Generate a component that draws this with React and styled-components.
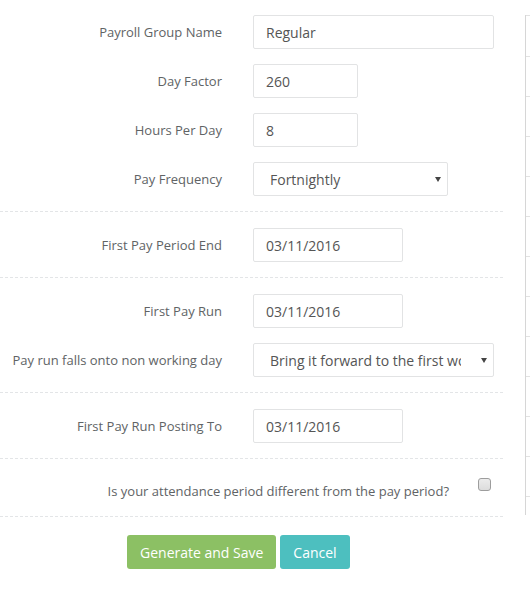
import styled, { createGlobalStyle } from 'styled-components';

const GlobalStyle = createGlobalStyle`
  body {
    margin: 0;
    background: #fff;
    font-family: 'Open Sans', 'DejaVu Sans', sans-serif;
  }
  * {
    box-sizing: border-box;
  }
`;

const Page = styled.div`
  display: flex;
  width: 530px;
`;

const Form = styled.form`
  width: 503px;
  flex: none;
  padding-top: 15px;
`;

const Row = styled.div`
  display: flex;
  align-items: center;
  gap: 31px;
  margin-bottom: 15px;
`;

const Label = styled.label`
  width: 222px;
  flex: none;
  text-align: right;
  font-size: 13px;
  line-height: 18px;
  padding-bottom: 1px;
  color: #606365;
`;

const TextInput = styled.input`
  width: ${(p) => p.$width}px;
  height: 34px;
  padding: 6px 12px;
  border: 1px solid #e2e3e4;
  border-radius: 2px;
  font-family: inherit;
  font-size: 14px;
  color: #555;
  background: #fff;
  outline: none;
`;

const SelectBox = styled.div`
  position: relative;
  width: ${(p) => p.$width}px;

  &::after {
    content: '';
    position: absolute;
    right: 7px;
    top: 15px;
    border-left: 3px solid transparent;
    border-right: 3px solid transparent;
    border-top: 5px solid #444;
    pointer-events: none;
  }
`;

const Select = styled.select`
  appearance: none;
  width: 100%;
  height: 34px;
  padding: 0 32px 0 16px;
  border: 1px solid #e2e3e4;
  border-radius: 2px;
  font-family: inherit;
  font-size: 14px;
  color: #555;
  background: #fff;
  outline: none;
`;

const Divider = styled.div`
  border-top: 1px dashed #e3e5e7;
  margin-bottom: 16px;
`;

const CheckRow = styled.div`
  display: flex;
  align-items: flex-start;
  gap: 29px;
  margin-bottom: 15px;
`;

const CheckLabel = styled.label`
  width: 449px;
  flex: none;
  text-align: right;
  padding-top: 6px;
  font-size: 13px;
  line-height: 20px;
  color: #606365;
`;

const Checkbox = styled.input`
  appearance: none;
  width: 13px;
  height: 13px;
  margin: 3px 0 0;
  border: 1px solid #9d9d9d;
  border-radius: 3px;
  background: linear-gradient(#ececec, #dcdcdc);
`;

const Actions = styled.div`
  display: flex;
  gap: 4px;
  padding-left: 127px;
  margin-top: 18px;
`;

const Button = styled.button`
  height: 34px;
  padding: 0 13px;
  border: none;
  border-radius: 3px;
  font-family: inherit;
  font-size: 14px;
  color: #fff;
  background: ${(p) => (p.$variant === 'cancel' ? '#4dbfbf' : '#8cc064')};
  cursor: pointer;
`;

const Side = styled.div`
  margin: 15px 0 0 22px;
  flex: 1;
  height: 500px;
  border-left: 1px solid #d6d6d6;
`;

const SideRow = styled.div`
  height: ${(p) => (p.$first ? 41 : 40)}px;
  border-top: 1px solid #e2e2e2;
`;

const Field = ({ label, children }) => (
  <Row>
    <Label>{label}</Label>
    {children}
  </Row>
);

const DropDown = ({ width, value }) => (
  <SelectBox $width={width}>
    <Select defaultValue={value}>
      <option>{value}</option>
    </Select>
  </SelectBox>
);

const App = () => {
  const sideRows = Array.from({ length: 13 });
  return (
    <Page>
      <GlobalStyle />
      <Form onSubmit={(e) => e.preventDefault()}>
        <Field label="Payroll Group Name">
          <TextInput $width={241} defaultValue="Regular" />
        </Field>
        <Field label="Day Factor">
          <TextInput $width={105} defaultValue="260" />
        </Field>
        <Field label="Hours Per Day">
          <TextInput $width={105} defaultValue="8" />
        </Field>
        <Field label="Pay Frequency">
          <DropDown width={195} value="Fortnightly" />
        </Field>
        <Divider />
        <Field label="First Pay Period End">
          <TextInput $width={150} defaultValue="03/11/2016" />
        </Field>
        <Divider />
        <Field label="First Pay Run">
          <TextInput $width={150} defaultValue="03/11/2016" />
        </Field>
        <Field label="Pay run falls onto non working day">
          <DropDown width={241} value="Bring it forward to the first working day" />
        </Field>
        <Divider />
        <Field label="First Pay Run Posting To">
          <TextInput $width={150} defaultValue="03/11/2016" />
        </Field>
        <Divider />
        <CheckRow>
          <CheckLabel>Is your attendance period different from the pay period?</CheckLabel>
          <Checkbox type="checkbox" />
        </CheckRow>
        <Divider />
        <Actions>
          <Button type="submit">Generate and Save</Button>
          <Button type="button" $variant="cancel">
            Cancel
          </Button>
        </Actions>
      </Form>
      <Side>
        {sideRows.map((_, i) => (
          <SideRow key={i} $first={i === 0} />
        ))}
      </Side>
    </Page>
  );
};

export default App;
